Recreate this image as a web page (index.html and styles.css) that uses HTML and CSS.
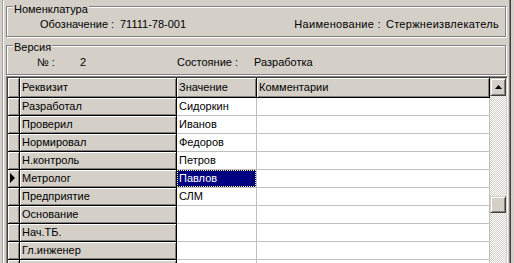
FILE: index.html
```html
<!DOCTYPE html>
<html lang="ru">
<head>
  <meta charset="UTF-8">
  <title>Карточка версии</title>
  <link rel="stylesheet" href="styles.css">
</head>
<body>
  <div class="frame">
    <div class="group group-nom">
      <div class="group-title">Номенклатура</div>
      <div class="line">
        <span class="lbl lbl-oboz">Обозначение :</span>
        <span class="val">71111-78-001</span>
        <span class="lbl lbl-name">Наименование :</span>
        <span class="val val-name">Стержнеизвлекатель</span>
      </div>
    </div>

    <div class="group group-ver">
      <div class="group-title">Версия</div>
      <div class="line">
        <span class="lbl lbl-num">№ :</span>
        <span class="val val-num">2</span>
        <span class="lbl lbl-state">Состояние :</span>
        <span class="val">Разработка</span>
      </div>
    </div>

    <div class="grid">
      <div class="table">
        <div class="cell fixed"></div>
        <div class="cell fixed">Реквизит</div>
        <div class="cell fixed">Значение</div>
        <div class="cell fixed">Комментарии</div>

        <div class="cell fixed"></div>
        <div class="cell fixed">Разработал</div>
        <div class="cell data">Сидоркин</div>
        <div class="cell data"></div>

        <div class="cell fixed"></div>
        <div class="cell fixed">Проверил</div>
        <div class="cell data">Иванов</div>
        <div class="cell data"></div>

        <div class="cell fixed"></div>
        <div class="cell fixed">Нормировал</div>
        <div class="cell data">Федоров</div>
        <div class="cell data"></div>

        <div class="cell fixed"></div>
        <div class="cell fixed">Н.контроль</div>
        <div class="cell data">Петров</div>
        <div class="cell data"></div>

        <div class="cell fixed indicator">
          <svg width="6" height="10" viewBox="0 0 6 10"><path d="M0 0 L5 5 L0 10 Z" fill="#000"/></svg>
        </div>
        <div class="cell fixed">Метролог</div>
        <div class="cell data selected"><span>Павлов</span></div>
        <div class="cell data"></div>

        <div class="cell fixed"></div>
        <div class="cell fixed">Предприятие</div>
        <div class="cell data">СЛМ</div>
        <div class="cell data"></div>

        <div class="cell fixed"></div>
        <div class="cell fixed">Основание</div>
        <div class="cell data"></div>
        <div class="cell data"></div>

        <div class="cell fixed"></div>
        <div class="cell fixed">Нач.ТБ.</div>
        <div class="cell data"></div>
        <div class="cell data"></div>

        <div class="cell fixed"></div>
        <div class="cell fixed">Гл.инженер</div>
        <div class="cell data"></div>
        <div class="cell data"></div>

        <div class="cell fixed"></div>
        <div class="cell fixed"></div>
        <div class="cell data"></div>
        <div class="cell data"></div>
      </div>

      <div class="scrollbar">
        <div class="sb-btn">
          <svg width="7" height="4" viewBox="0 0 7 4"><path d="M3.5 0 L7 4 L0 4 Z" fill="#000"/></svg>
        </div>
        <div class="sb-track">
          <div class="sb-thumb"></div>
        </div>
      </div>
    </div>
  </div>
</body>
</html>
```

FILE: styles.css
```css
* {
  box-sizing: border-box;
  margin: 0;
  padding: 0;
}

body {
  background: #d4d0c8;
  font-family: "Liberation Sans", Arial, sans-serif;
  font-size: 11px;
  color: #000;
  height: 263px;
  overflow: hidden;
}

/* Окно формы */
.frame {
  margin-left: 2px;
  width: 509px;
  height: 263px;
  border-left: 1px solid #a0a0a0;
  border-right: 1px solid #404040;
  box-shadow: inset 1px 0 0 #fff, inset -1px 0 0 #808080;
  padding: 6px 2px 0 3px;
  overflow: hidden;
}

/* Групповые рамки */
.group {
  border: 1px solid #808080;
  box-shadow: inset 1px 1px 0 #fff, 1px 1px 0 #fff;
  margin-right: 2px;
  padding: 0 6px 5px 0;
}

.group-title {
  display: table;
  background: #d4d0c8;
  line-height: 13px;
  padding: 0 1px;
  margin: -4px 0 2px 6px;
}

.group-ver {
  margin-top: 8px;
}

.group-ver .group-title {
  margin-top: -5px;
}

.line {
  display: flex;
  line-height: 13px;
  white-space: nowrap;
}

.lbl-oboz {
  margin-left: 33px;
  width: 80px;
}

.lbl-name {
  margin-left: auto;
  letter-spacing: 0.3px;
}

.val-name {
  margin-left: 5px;
  letter-spacing: 0.3px;
}

.lbl-num {
  margin-left: 30px;
  width: 43px;
}

.val-num {
  width: 97px;
}

.lbl-state {
  width: 77px;
}

/* Таблица */
.grid {
  margin-top: 1px;
  display: flex;
  border-top: 1px solid #808080;
  border-left: 1px solid #808080;
  border-right: 1px solid #fff;
  box-shadow: inset 1px 1px 0 #404040, inset -1px 0 0 #d4d0c8;
  padding: 1px 1px 0 1px;
  height: 187px;
  overflow: hidden;
}

.table {
  display: grid;
  grid-template-columns: 12px 157px 80px 233px;
  grid-template-rows: 20px;
  grid-auto-rows: 18px;
}

.cell {
  line-height: 17px;
  padding-left: 2px;
  white-space: nowrap;
  overflow: hidden;
}

.fixed {
  background: #d4d0c8;
  border-right: 1px solid #000;
  border-bottom: 1px solid #000;
  box-shadow: inset 1px 1px 0 #fff, inset -1px -1px 0 #808080;
}

.table > .fixed:nth-child(-n+4) {
  line-height: 19px;
}

.data {
  background: #fff;
  border-right: 1px solid #c0c0c0;
  border-bottom: 1px solid #c0c0c0;
}

.indicator {
  padding: 3px 0 0 2px;
}

.indicator svg {
  display: block;
}

.selected {
  padding: 0;
}

.selected span {
  display: block;
  height: 17px;
  background: #000080;
  color: #fff;
  padding-left: 2px;
  outline: 1px dotted #ffff80;
  outline-offset: -1px;
}

/* Полоса прокрутки */
.scrollbar {
  width: 17px;
  display: flex;
  flex-direction: column;
}

.sb-btn,
.sb-thumb {
  background: #d4d0c8;
  border-top: 1px solid #d4d0c8;
  border-left: 1px solid #d4d0c8;
  border-right: 1px solid #404040;
  border-bottom: 1px solid #404040;
  box-shadow: inset 1px 1px 0 #fff, inset -1px -1px 0 #808080;
}

.sb-btn {
  height: 18px;
  display: flex;
  align-items: center;
  justify-content: center;
}

.sb-track {
  flex: 1;
  background: repeating-conic-gradient(#d4d0c8 0 25%, #fff 0 50%) 0 0 / 2px 2px;
}

.sb-thumb {
  margin-top: 100px;
  height: 17px;
}
```
